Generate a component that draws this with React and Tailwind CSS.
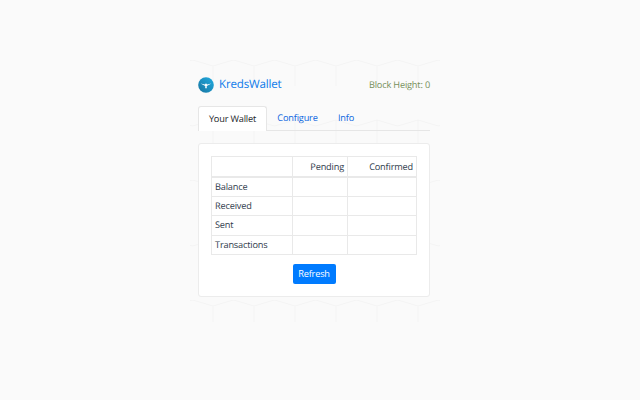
import React from 'react'

const rows = ['Balance', 'Received', 'Sent', 'Transactions']

function Logo() {
  return (
    <svg width="16" height="16" viewBox="0 0 16 16">
      <defs>
        <linearGradient id="logo" x1="1" y1="0" x2="0" y2="1">
          <stop offset="0" stopColor="#22ace2" />
          <stop offset="1" stopColor="#17749f" />
        </linearGradient>
      </defs>
      <circle cx="8" cy="8" r="7.8" fill="url(#logo)" />
      <path d="M2.6 6.4 L6.9 7.4 L8 6.3 L9.1 7.4 L13.4 6.4 L9.7 8.6 L8.7 9 L8.8 11.6 L8 10.9 L7.2 11.6 L7.3 9 L6.3 8.6 Z" fill="#fff" />
    </svg>
  )
}

function HexBackground() {
  return (
    <svg className="absolute left-[190px] top-[60px]" width="250" height="262">
      <defs>
        <pattern id="hex" width="41" height="120" patternUnits="userSpaceOnUse" patternTransform="translate(2.5 0)">
          <path d="M0 0 L20.5 6 L41 0 M20.5 6 V26 M20.5 60 L41 66 M0 66 L20.5 60 M20.5 60 V86" fill="none" stroke="#f4f4f4" strokeWidth="1" />
        </pattern>
      </defs>
      <rect width="250" height="262" fill="url(#hex)" />
    </svg>
  )
}

export default function App() {
  return (
    <div className="relative h-[400px] w-[640px] overflow-hidden bg-[#fafafa] font-['Open_Sans',sans-serif] text-[9.2px] tracking-[-0.17px] text-[#2f3b4c] [text-rendering:geometricPrecision]">
      <HexBackground />

      <div className="relative ml-[198px] w-[232px] pt-[77px]">
        <div className="flex h-[16px] items-center justify-between">
          <div className="flex items-center gap-[5px]">
            <Logo />
            <span className="text-[11.6px] tracking-[-0.2px] text-[#0f7bea]">KredsWallet</span>
          </div>
          <span className="text-[9.2px] text-[#76905a]">Block Height: 0</span>
        </div>

        <div className="mt-[13px] flex h-[25px] border-b border-[#e6e6e6]">
          <div className="flex h-[25px] w-[69px] items-center justify-center rounded-t-[3px] border border-b-0 border-[#e6e6e6] bg-white text-[#212529]">
            Your Wallet
          </div>
          <div className="flex h-[24px] w-[61px] items-center justify-center text-[#0b65e0]">Configure</div>
          <div className="flex h-[24px] w-[36px] items-center justify-center text-[#0b65e0]">Info</div>
        </div>

        <div className="mt-[12px] rounded-[3px] border border-[#ececec] bg-white px-[12px] pb-[12px] pt-[12px]">
          <table className="w-[206px] table-fixed border-collapse border border-[#e9e9e9]">
            <thead>
              <tr className="h-[20px] border-b-2 border-[#e9e9e9]">
                <th className="w-[81px] border-r border-[#e9e9e9]"></th>
                <th className="w-[55px] border-r border-[#e9e9e9] pr-[3px] pt-[1px] text-right font-normal">Pending</th>
                <th className="pr-[3px] pt-[1px] text-right font-normal">Confirmed</th>
              </tr>
            </thead>
            <tbody>
              {rows.map((row) => (
                <tr key={row} className="h-[19.5px] border-b border-[#e9e9e9]">
                  <td className="border-r border-[#e9e9e9] pl-[3px]">{row}</td>
                  <td className="border-r border-[#e9e9e9]"></td>
                  <td></td>
                </tr>
              ))}
            </tbody>
          </table>

          <div className="mt-[9px] flex justify-center">
            <button className="h-[20px] w-[43px] rounded-[2px] bg-[#007bff] text-[9.2px] text-white">Refresh</button>
          </div>
        </div>
      </div>
    </div>
  )
}
